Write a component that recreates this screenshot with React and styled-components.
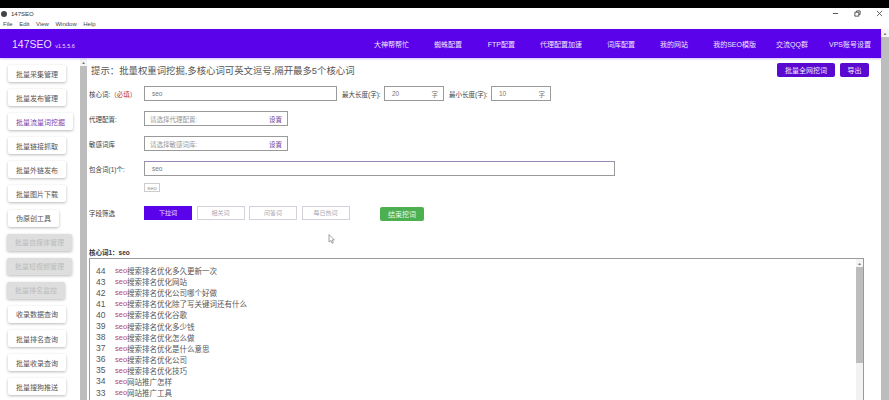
import React from "react";
import styled, { createGlobalStyle } from "styled-components";

const Global = createGlobalStyle`
	html, body {
		margin: 0;
		padding: 0;
		background: #fff;
		overflow: hidden;
	}
	body {
		font-family: "Liberation Sans", "Noto Sans CJK SC", sans-serif;
		color: #444;
	}
`;

const Window = styled.div`
	position: relative;
	width: 889px;
	height: 400px;
	display: flex;
	flex-direction: column;
	overflow: hidden;
	background: #fff;
`;

const BlackBar = styled.div`
	height: 8px;
	flex: none;
	background: #000;
`;

const TitleBar = styled.div`
	height: 11px;
	flex: none;
	display: flex;
	align-items: center;
	padding: 0 0 0 1px;
	font-size: 6px;
	color: #333;
`;

const AppIcon = styled.span`
	width: 6px;
	height: 6px;
	margin-right: 4px;
	border-radius: 50%;
	background: #444;
`;

const WinControls = styled.div`
	margin-left: auto;
	display: flex;
	align-items: center;
	gap: 15px;
	padding-right: 6px;
	svg {
		display: block;
		width: 7px;
		height: 7px;
	}
`;

const MenuBar = styled.div`
	height: 10px;
	flex: none;
	display: flex;
	align-items: center;
	gap: 6.5px;
	padding-left: 3px;
	font-size: 6px;
	color: #444;
`;

const Page = styled.div`
	flex: 1;
	min-height: 0;
	display: flex;
`;

const PageContent = styled.div`
	flex: 1;
	min-width: 0;
	display: flex;
	flex-direction: column;
`;

const Header = styled.header`
	height: 29px;
	flex: none;
	display: flex;
	align-items: center;
	background: #5a02ea;
	box-shadow: 0 1px 2px rgba(90, 2, 234, 0.25);
	position: relative;
	z-index: 1;
`;

const Logo = styled.div`
	width: 130px;
	flex: none;
	padding-left: 12px;
	box-sizing: border-box;
	color: #eadfff;
	font-size: 10.5px;
	white-space: nowrap;
	small {
		font-size: 5.5px;
		margin-left: 3.5px;
	}
`;

const Nav = styled.nav`
	flex: 1;
	display: flex;
	justify-content: flex-end;
	padding-right: 10px;
`;

const NavItem = styled.a`
	width: ${p => p.$w}px;
	flex: none;
	text-align: right;
	font-size: 7px;
	color: #f0e6ff;
	white-space: nowrap;
`;

const Body = styled.div`
	flex: 1;
	min-height: 0;
	display: flex;
`;

const Sidebar = styled.aside`
	width: 80px;
	flex: none;
	padding: 7px 0 0 8px;
	box-sizing: border-box;
	display: flex;
	flex-direction: column;
	align-items: flex-start;
	gap: 7.1px;
`;

const SideButton = styled.button`
	height: 17px;
	flex: none;
	padding: 0 8px;
	margin-left: ${p => (p.$disabled ? -1 : 0)}px;
	border: 0;
	border-radius: 2px;
	background: ${p => (p.$disabled ? "#dedede" : "#fff")};
	box-shadow: 0 1px 3px rgba(0, 0, 0, 0.28);
	font: 7px "Liberation Sans", "Noto Sans CJK SC", sans-serif;
	color: ${p => (p.$disabled ? "#bbb" : p.$active ? "#7a3fb0" : "#555")};
	white-space: nowrap;
`;

const ScrollTrack = styled.div`
	width: ${p => p.$w || 7}px;
	flex: none;
	display: flex;
	flex-direction: column;
	background: ${p => p.$bg || "#f2f2f2"};
`;

const ScrollArrow = styled.div`
	height: 8px;
	flex: none;
	display: flex;
	justify-content: center;
	align-items: center;
	color: #666;
	font-size: 4px;
	background: #f4f4f4;
`;

const ScrollThumb = styled.div`
	flex: ${p => (p.$h ? "none" : 1)};
	height: ${p => p.$h || 0}px;
	background: #bdbdbd;
`;

const Main = styled.main`
	flex: 1;
	min-width: 0;
	padding: 2px 12px 0 2px;
	display: flex;
	flex-direction: column;
`;

const TipRow = styled.div`
	height: 18px;
	flex: none;
	margin-top: 1px;
	display: flex;
	align-items: center;
	padding-left: 2px;
	font-size: 9.4px;
	color: #555;
	white-space: nowrap;
`;

const TipActions = styled.div`
	margin-left: auto;
	display: flex;
	gap: 5px;
`;

const PurpleButton = styled.button`
	height: 14px;
	width: ${p => p.$w}px;
	padding: 0;
	border: 0;
	border-radius: 2px;
	background: #5a0ad0;
	color: #f3eaff;
	font: 7px "Liberation Sans", "Noto Sans CJK SC", sans-serif;
`;

const FormRow = styled.div`
	height: ${p => p.$h || 15}px;
	flex: none;
	margin-top: ${p => p.$mt || 0}px;
	display: flex;
	align-items: center;
	font-size: 6.5px;
	color: #444;
	white-space: nowrap;
`;

const RowLabel = styled.label`
	width: 55px;
	flex: none;
	em {
		font-style: normal;
		color: #b33;
	}
`;

const Field = styled.div`
	height: 15px;
	width: ${p => p.$w}px;
	flex: none;
	box-sizing: border-box;
	display: flex;
	align-items: center;
	justify-content: space-between;
	padding: 0 ${p => p.$pr || 5}px 0 ${p => p.$pl || 7}px;
	border: 1px solid ${p => p.$line || "#9a9a9a"};
	border-top-color: ${p => p.$top || p.$line || "#9a9a9a"};
	background: #fff;
	font-size: 6.5px;
	color: ${p => (p.$muted ? "#999" : "#777")};
`;

const SetLink = styled.span`
	color: #6a3a9a;
`;

const InlineLabel = styled.span`
	margin: 0 5px;
	width: 37px;
	flex: none;
`;

const Tag = styled.span`
	width: 16px;
	height: 9px;
	margin-left: 55px;
	box-sizing: border-box;
	border: 1px solid #ccc;
	display: flex;
	align-items: center;
	justify-content: center;
	font-size: 6px;
	color: #999;
`;

const FilterBar = styled.div`
	display: flex;
	gap: 4.5px;
	align-items: center;
`;

const FilterButton = styled.button`
	width: 48px;
	height: 14px;
	padding: 0;
	box-sizing: border-box;
	border: 1px solid ${p => (p.$on ? "#5a02ea" : "#d5d0da")};
	background: ${p => (p.$on ? "#5a02ea" : "#fff")};
	color: ${p => (p.$on ? "#efe6ff" : "#a9a9b5")};
	font: 6px "Liberation Sans", "Noto Sans CJK SC", sans-serif;
`;

const GreenButton = styled.button`
	width: 44px;
	height: 14px;
	margin: 2px 0 0 30.5px;
	padding: 0;
	border: 0;
	border-radius: 2px;
	background: #4caf50;
	color: #eefbee;
	font: 7px "Liberation Sans", "Noto Sans CJK SC", sans-serif;
`;

const SectionTitle = styled.div`
	margin-top: 27px;
	height: 10px;
	flex: none;
	display: flex;
	align-items: center;
	font-size: 6.5px;
	font-weight: bold;
	color: #333;
`;

const ResultBox = styled.div`
	margin-top: 1px;
	width: 775px;
	flex: 1;
	min-height: 0;
	box-sizing: border-box;
	display: flex;
	border: 1px solid #9a9a9a;
	border-bottom: 0;
`;

const ResultList = styled.ul`
	flex: 1;
	list-style: none;
	margin: 0;
	padding: 6px 0 0 6px;
`;

const ResultRow = styled.li`
	height: 11.1px;
	display: flex;
	align-items: center;
	font-size: 7.5px;
	color: #555;
	white-space: nowrap;
`;

const RowNum = styled.span`
	width: 19px;
	flex: none;
	font-size: 8.5px;
`;

const Hit = styled.span`
	color: #b5485f;
`;

const Cursor = styled.svg`
	position: absolute;
	left: 328px;
	top: 234px;
	width: 7px;
	height: 10px;
`;

const rows = [
	[44, "搜索排名优化多久更新一次"],
	[43, "搜索排名优化网站"],
	[42, "搜索排名优化公司哪个好做"],
	[41, "搜索排名优化除了写关键词还有什么"],
	[40, "搜索排名优化谷歌"],
	[39, "搜索排名优化多少钱"],
	[38, "搜索排名优化怎么做"],
	[37, "搜索排名优化是什么意思"],
	[36, "搜索排名优化公司"],
	[35, "搜索排名优化技巧"],
	[34, "网站推广怎样"],
	[33, "网站推广工具"],
];

const sideItems = [
	{ label: "批量采集管理" },
	{ label: "批量发布管理" },
	{ label: "批量流量词挖掘", active: true },
	{ label: "批量链接抓取" },
	{ label: "批量外链发布" },
	{ label: "批量图片下载" },
	{ label: "伪原创工具" },
	{ label: "批量自媒体管理", disabled: true },
	{ label: "批量短视频管理", disabled: true },
	{ label: "批量排名监控", disabled: true },
	{ label: "收录数据查询" },
	{ label: "批量排名查询" },
	{ label: "批量收录查询" },
	{ label: "批量搜狗推送" },
];

const navItems = [
	["大神帮帮忙", 253],
	["蜘蛛配置", 53],
	["FTP配置", 53],
	["代理配置加速", 67],
	["词库配置", 53],
	["我的网站", 53],
	["我的SEO模版", 68],
	["交流QQ群", 52],
	["VPS账号设置", 63],
];

export default function App() {
	return (
		<Window>
			<Global />
			<BlackBar />
			<TitleBar>
				<AppIcon />
				147SEO
				<WinControls>
					<svg viewBox="0 0 8 8"><path d="M1 4h6" stroke="#444" strokeWidth="1" /></svg>
					<svg viewBox="0 0 8 8" fill="none" stroke="#444"><path d="M1 2.5h4.5V7H1zM3 2.500V1h4v4H5.500" /></svg>
					<svg viewBox="0 0 8 8"><path d="M1 1l6 6M7 1L1 7" stroke="#444" strokeWidth="0.9" /></svg>
				</WinControls>
			</TitleBar>
			<MenuBar>
				<span>File</span>
				<span>Edit</span>
				<span>View</span>
				<span>Window</span>
				<span>Help</span>
			</MenuBar>
			<Page>
				<PageContent>
					<Header>
						<Logo>
							147SEO<small>v1.5.5.6</small>
						</Logo>
						<Nav>
							{navItems.map(([label, w]) => (
								<NavItem key={label} $w={w}>{label}</NavItem>
							))}
						</Nav>
					</Header>
					<Body>
						<Sidebar>
							{sideItems.map(item => (
								<SideButton key={item.label} $active={item.active} $disabled={item.disabled}>
									{item.label}
								</SideButton>
							))}
						</Sidebar>
						<ScrollTrack>
							<ScrollArrow>▲</ScrollArrow>
							<ScrollThumb />
						</ScrollTrack>
						<Main>
							<TipRow>
								提示：批量权重词挖掘,多核心词可英文逗号,隔开最多5个核心词
								<TipActions>
									<PurpleButton $w={58}>批量全网挖词</PurpleButton>
									<PurpleButton $w={29}>导出</PurpleButton>
								</TipActions>
							</TipRow>
							<FormRow $mt={7}>
								<RowLabel>核心词:（<em>必填</em>）</RowLabel>
								<Field $w={193}>seo</Field>
								<InlineLabel>最大长度(字):</InlineLabel>
								<Field $w={60}>20<span>字</span></Field>
								<InlineLabel>最小长度(字):</InlineLabel>
								<Field $w={60}>10<span>字</span></Field>
							</FormRow>
							<FormRow $mt={10}>
								<RowLabel>代理配置:</RowLabel>
								<Field $w={144} $pl={5} $muted>请选择代理配置:<SetLink>设置</SetLink></Field>
							</FormRow>
							<FormRow $mt={10}>
								<RowLabel>敏感词库</RowLabel>
								<Field $w={144} $pl={5} $muted>请选择敏感词库:<SetLink>设置</SetLink></Field>
							</FormRow>
							<FormRow $mt={10}>
								<RowLabel>包含词(1)个:</RowLabel>
								<Field $w={471} $top="#9c86b5">seo</Field>
							</FormRow>
							<FormRow $mt={7} $h={9}>
								<Tag>seo</Tag>
							</FormRow>
							<FormRow $mt={13}>
								<RowLabel>字段筛选</RowLabel>
								<FilterBar>
									<FilterButton $on>下拉词</FilterButton>
									<FilterButton>相关词</FilterButton>
									<FilterButton>问答词</FilterButton>
									<FilterButton>每日热词</FilterButton>
								</FilterBar>
								<GreenButton>结束挖词</GreenButton>
							</FormRow>
							<SectionTitle>核心词1：seo</SectionTitle>
							<ResultBox>
								<ResultList>
									{rows.map(([n, text]) => (
										<ResultRow key={n}>
											<RowNum>{n}</RowNum>
											<Hit>seo</Hit>
											{text}
										</ResultRow>
									))}
								</ResultList>
								<ScrollTrack $w={7}>
									<ScrollArrow>▲</ScrollArrow>
									<ScrollThumb $h={96} />
								</ScrollTrack>
							</ResultBox>
						</Main>
					</Body>
				</PageContent>
				<ScrollTrack $w={8} $bg="#fff">
					<ScrollArrow>▲</ScrollArrow>
					<ScrollThumb />
				</ScrollTrack>
			</Page>
			<Cursor viewBox="0 0 7 10">
				<path d="M1 0.500V8L2.800 6.500L4 9.300L5.300 8.700L4.100 6H6.300Z" fill="#fff" stroke="#666" strokeWidth="0.6" />
			</Cursor>
		</Window>
	);
}
